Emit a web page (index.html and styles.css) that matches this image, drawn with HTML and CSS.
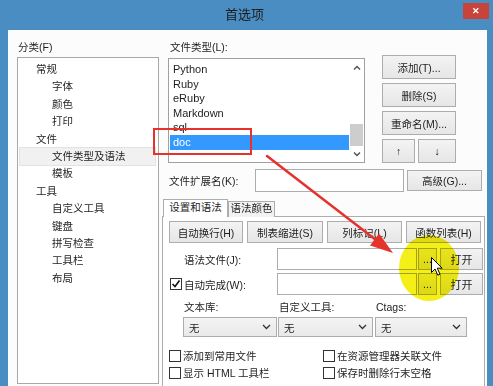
FILE: index.html
```html
<!DOCTYPE html>
<html lang="zh-CN">
  <head>
    <meta charset="UTF-8" />
    <title>首选项</title>
    <link rel="stylesheet" href="styles.css">
  </head>
  <body>
    <div class="window">
      <div class="titlebar">
        <span></span>
        <span class="title">首选项</span>
        <span class="close">✕</span>
      </div>

      <div class="client">
        <div class="left">
          <div class="label">分类(F)</div>
          <ul class="tree">
            <li class="lv1">常规</li>
            <li class="lv2">字体</li>
            <li class="lv2">颜色</li>
            <li class="lv2">打印</li>
            <li class="lv1">文件</li>
            <li class="lv2 selected">文件类型及语法</li>
            <li class="lv2">模板</li>
            <li class="lv1">工具</li>
            <li class="lv2">自定义工具</li>
            <li class="lv2">键盘</li>
            <li class="lv2">拼写检查</li>
            <li class="lv2">工具栏</li>
            <li class="lv2">布局</li>
          </ul>
        </div>

        <div class="right">
          <div class="types">
            <div class="types-list">
              <div class="label">文件类型(L):</div>
              <div class="listbox">
                <ul class="items">
                  <li>Python</li>
                  <li>Ruby</li>
                  <li>eRuby</li>
                  <li>Markdown</li>
                  <li>sql</li>
                  <li class="selected">doc</li>
                </ul>
                <div class="scrollbar">
                  <span class="scroll-btn">
                    <svg width="8" height="5" viewBox="0 0 8 5"><polyline points="1,4.5 4,1.5 7,4.5" /></svg>
                  </span>
                  <div class="track"><div class="thumb"></div></div>
                  <span class="scroll-btn">
                    <svg width="8" height="5" viewBox="0 0 8 5"><polyline points="1,0.5 4,3.5 7,0.5" /></svg>
                  </span>
                </div>
              </div>
            </div>

            <div class="types-buttons">
              <button class="btn">添加(T)...</button>
              <button class="btn">删除(S)</button>
              <button class="btn">重命名(M)...</button>
              <div class="move-buttons">
                <button class="btn up">↑</button>
                <button class="btn down">↓</button>
              </div>
            </div>
          </div>

          <div class="ext-row">
            <label class="ext-label">文件扩展名(K):</label>
            <div class="field ext-field"></div>
            <button class="btn advanced">高级(G)...</button>
          </div>

          <div class="tabs">
            <span class="tab active">设置和语法</span>
            <span class="tab">语法颜色</span>
          </div>

          <div class="panel">
            <div class="button-row">
              <button class="btn w74">自动换行(H)</button>
              <button class="btn w76">制表缩进(S)</button>
              <button class="btn w75">列标记(L)</button>
              <button class="btn w75">函数列表(H)</button>
            </div>

            <div class="file-row first">
              <span class="file-label">语法文件(J):</span>
              <div class="field file-field"></div>
              <button class="btn dots">...</button>
              <button class="btn open">打开</button>
            </div>

            <div class="file-row">
              <span class="file-label check-label">
                <span class="checkbox checked">
                  <svg width="10" height="10" viewBox="0 0 10 10"><polyline points="1.5,5 4,7.5 8.5,1.5" /></svg>
                </span>
                自动完成(W):
              </span>
              <div class="field file-field"></div>
              <button class="btn dots">...</button>
              <button class="btn open">打开</button>
            </div>

            <div class="lib-grid lib-labels">
              <span>文本库:</span>
              <span>自定义工具:</span>
              <span>Ctags:</span>
            </div>

            <div class="lib-grid lib-selects">
              <div class="select s94"><span>无</span><svg width="9" height="6" viewBox="0 0 9 6"><polyline points="1,1 4.5,4.5 8,1" /></svg></div>
              <div class="select s95"><span>无</span><svg width="9" height="6" viewBox="0 0 9 6"><polyline points="1,1 4.5,4.5 8,1" /></svg></div>
              <div class="select s92"><span>无</span><svg width="9" height="6" viewBox="0 0 9 6"><polyline points="1,1 4.5,4.5 8,1" /></svg></div>
            </div>

            <div class="options">
              <span class="option"><span class="checkbox"></span>添加到常用文件</span>
              <span class="option"><span class="checkbox"></span>在资源管理器关联文件</span>
              <span class="option"><span class="checkbox"></span>显示 HTML 工具栏</span>
              <span class="option"><span class="checkbox"></span>保存时删除行末空格</span>
            </div>
          </div>
        </div>
      </div>

      <!-- annotations drawn over the screenshot -->
      <div class="red-box"></div>
      <div class="highlight"></div>
      <svg class="arrow-mark" width="493" height="386" viewBox="0 0 493 386">
        <line x1="267" y1="156" x2="376" y2="240" stroke="#e5322d" stroke-width="2.5" stroke-linecap="round" />
        <polygon points="393,253 370,245.5 379,233.5" fill="#e5322d" />
      </svg>
      <svg class="cursor" width="13" height="20" viewBox="0 0 13 20">
        <path d="M0.5 0.5 L0.5 15.5 L4 12 L6.8 18.2 L9 17.2 L6.3 11.2 L11.2 11.2 Z" fill="#fff" stroke="#000" stroke-width="1" />
      </svg>
    </div>
  </body>
</html>
```

FILE: styles.css
```css
* {
  box-sizing: border-box;
}

body {
  margin: 0;
  width: 493px;
  height: 386px;
  overflow: hidden;
  font-family: "Liberation Sans", "Noto Sans CJK SC", sans-serif;
  font-size: 10.5px;
  color: #1e1e1e;
  background: #4a8dc2;
}

.window {
  position: relative;
  width: 493px;
  height: 386px;
  padding: 0 6px 0 8px;
  background: #4a8dc2;
}

/* title bar */

.titlebar {
  display: grid;
  grid-template-columns: 1fr auto 1fr;
  align-items: start;
  height: 30px;
  margin: 0 -6px 0 -8px;
  padding-right: 4px;
}

.title {
  font-size: 13px;
  line-height: 30px;
  color: #1c1c1c;
}

.close {
  justify-self: end;
  width: 26px;
  height: 16px;
  margin-top: 3px;
  background: #c8433a;
  color: #fff;
  font-size: 9px;
  font-weight: bold;
  line-height: 16px;
  text-align: center;
}

/* dialog body */

.client {
  display: flex;
  height: 356px;
  background: #fcfcfc;
}

.label {
  height: 16px;
  line-height: 16px;
  margin-top: 9px;
  padding-left: 1px;
}

.left {
  width: 154px;
  padding-left: 9px;
}

.tree {
  list-style: none;
  width: 142px;
  height: 327px;
  margin: 2px 0 0;
  padding: 3px 0 0;
  border: 1px solid #a9a9a9;
  background: #fff;
}

.tree li {
  height: 17.4px;
  line-height: 17.4px;
  margin: 0 3px 0 2px;
}

.tree .lv1 {
  padding-left: 16px;
}

.tree .lv2 {
  padding-left: 32px;
}

.tree .selected {
  background: #f1f1f1;
  box-shadow: 0 0 0 1px #e2e2e2;
}

.right {
  width: 325px;
}

.types {
  display: flex;
}

.types-list {
  width: 197px;
  margin-left: 6px;
}

.types-list .label {
  padding-left: 2px;
}

.listbox {
  display: flex;
  height: 105px;
  margin-top: 3px;
  border: 1px solid #a0a0a0;
  background: #fff;
}

.items {
  flex: 1;
  list-style: none;
  margin: 0;
  padding: 3px 0 0;
  font-size: 11px;
}

.items li {
  height: 14.6px;
  line-height: 14.6px;
  margin-left: 1px;
  padding-left: 3px;
}

.items .selected {
  background: #3399ff;
  color: #fff;
}

.scrollbar {
  display: flex;
  flex-direction: column;
  width: 15px;
  background: #fff;
}

.scroll-btn {
  display: flex;
  align-items: center;
  justify-content: center;
  height: 17px;
}

.scroll-btn:last-child {
  height: 16px;
}

.scroll-btn polyline {
  fill: none;
  stroke: #505050;
  stroke-width: 1.4;
}

.track {
  flex: 1;
  display: flex;
  flex-direction: column;
  justify-content: flex-end;
  padding: 0 1px;
}

.thumb {
  height: 22px;
  background: #cdcdcd;
}

.btn {
  height: 24px;
  padding: 0;
  border: 1px solid #adadad;
  background: linear-gradient(#f3f3f3, #e6e6e6);
  font: inherit;
  color: inherit;
}

.types-buttons {
  display: flex;
  flex-direction: column;
  gap: 4px;
  width: 74px;
  margin: 25px 0 0 17px;
}

.move-buttons {
  display: flex;
  gap: 3px;
}

.move-buttons .up {
  width: 33px;
}

.move-buttons .down {
  width: 38px;
}

.field {
  border: 1px solid #abadb3;
  background: #fff;
}

.ext-row {
  display: flex;
  align-items: center;
  height: 23px;
  margin-top: 6px;
  padding-left: 7px;
}

.ext-label {
  width: 86px;
}

.ext-field {
  width: 149px;
  height: 23px;
}

.advanced {
  width: 75px;
  height: 21px;
  margin-left: 3px;
}

/* tab control */

.tabs {
  display: flex;
  align-items: flex-end;
  height: 18px;
  margin: 7px 0 0 1px;
}

.tab {
  height: 16px;
  width: 47px;
  line-height: 12px;
  text-align: center;
  white-space: nowrap;
  border: 1px solid #adadad;
  border-bottom: none;
  background: #f2f2f2;
}

.tab.active {
  position: relative;
  z-index: 1;
  width: 65px;
  height: 18px;
  line-height: 15px;
  background: #fff;
}

.panel {
  width: 323px;
  height: 175px;
  margin-top: -1px;
  padding-top: 4px;
  border: 1px solid #adadad;
  background: #fff;
}

.button-row {
  display: flex;
  gap: 4px;
  padding-left: 6px;
}

.button-row .btn {
  height: 22px;
}

.w74 { width: 74px; }
.w75 { width: 75px; }
.w76 { width: 76px; }

.file-row {
  display: flex;
  align-items: center;
  height: 22px;
  margin-top: 3px;
}

.file-row.first {
  margin-top: 5px;
}

.file-label {
  width: 114px;
  padding-left: 21px;
}

.check-label {
  display: flex;
  align-items: center;
  gap: 2px;
  padding-left: 7px;
}

.file-field {
  width: 140px;
  height: 22px;
}

.dots {
  width: 19px;
  height: 22px;
  margin-left: 1px;
  line-height: 14px;
}

.open {
  width: 43px;
  height: 22px;
  margin-left: 3px;
  font-size: 11px;
}

.checkbox {
  display: inline-flex;
  align-items: center;
  justify-content: center;
  width: 12px;
  height: 12px;
  border: 1px solid #333;
  background: #fff;
}

.checkbox polyline {
  fill: none;
  stroke: #111;
  stroke-width: 1.6;
}

.lib-grid {
  display: grid;
  grid-template-columns: 95px 97px 92px;
  padding-left: 20px;
}

.lib-labels {
  height: 16px;
  line-height: 16px;
  margin-top: 4px;
  padding-left: 21px;
}

.lib-selects {
  margin-top: 2px;
}

.select {
  display: flex;
  align-items: center;
  justify-content: space-between;
  height: 20px;
  padding: 0 5px 0 5px;
  border: 1px solid #acacac;
  background: linear-gradient(#f4f4f4, #e9e9e9);
}

.select polyline {
  fill: none;
  stroke: #333;
  stroke-width: 1.3;
}

.s94 { width: 94px; }
.s95 { width: 95px; }
.s92 { width: 92px; }

.options {
  display: grid;
  grid-template-columns: 154px auto;
  margin-top: 10px;
  padding-left: 6px;
}

.option {
  display: flex;
  align-items: center;
  gap: 2px;
  height: 17px;
}

/* annotations */

.red-box {
  position: absolute;
  left: 153px;
  top: 128px;
  width: 99px;
  height: 27px;
  border: 2.5px solid #e5322d;
}

.highlight {
  position: absolute;
  left: 399px;
  top: 235px;
  width: 60px;
  height: 66px;
  border-radius: 50%;
  background: #f4ee00;
  mix-blend-mode: multiply;
  opacity: 0.9;
}

.arrow-mark {
  position: absolute;
  left: 0;
  top: 0;
  pointer-events: none;
}

.cursor {
  position: absolute;
  left: 431px;
  top: 257px;
}
```
